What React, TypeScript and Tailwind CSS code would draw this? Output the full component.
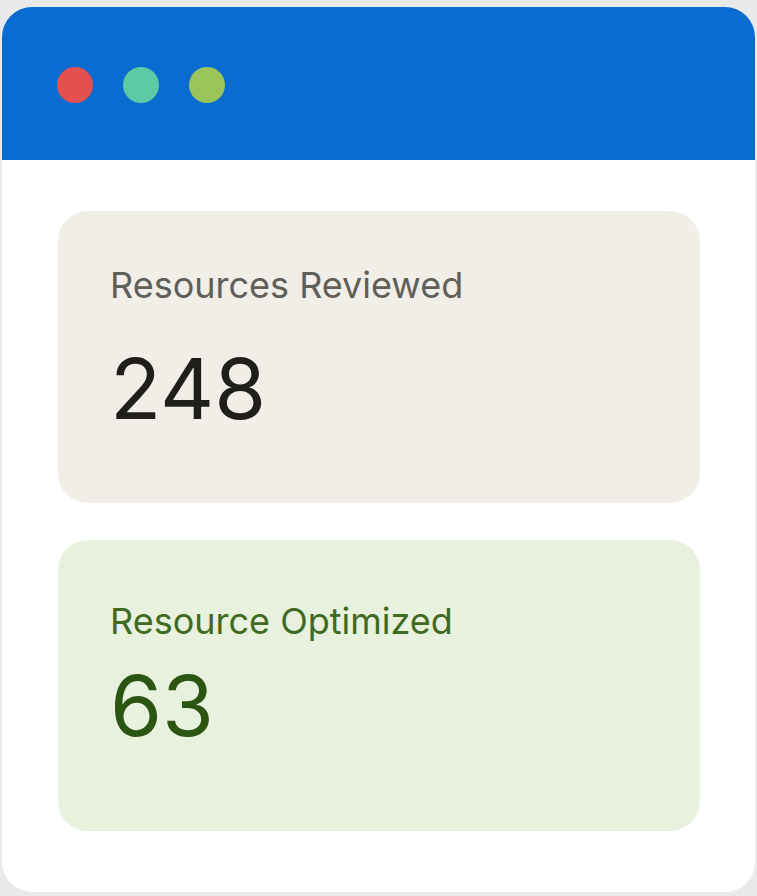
export default function App() {
  return (
    <div
      className="h-[896px] w-[757px] bg-[#e9e9e9] pl-[2px] pr-[2px] pt-[7px] pb-[4px]"
      style={{ fontFamily: "Inter, 'Noto Sans', sans-serif" }}
    >
      <div className="flex h-full flex-col overflow-hidden rounded-[30px] bg-white">
        {/* title bar */}
        <div className="flex h-[153px] items-start gap-[30px] bg-[#0a6bd0] pl-[55px] pt-[60px]">
          <span className="h-[36px] w-[36px] rounded-full bg-[#e44f4f]" />
          <span className="h-[36px] w-[36px] rounded-full bg-[#5ccaa5]" />
          <span className="h-[36px] w-[36px] rounded-full bg-[#9bc45a]" />
        </div>

        <div className="flex flex-col gap-[37px] px-[55px] pl-[56px] pt-[51px]">
          <div className="h-[292px] rounded-[30px] bg-[#f0eee7] pl-[52px] pt-[56px]">
            <div className="text-[36px] leading-none text-[#5f5e59]">Resources Reviewed</div>
            <div className="mt-[44px] text-[84px] leading-none text-[#1f1e1b]">248</div>
          </div>
          <div className="h-[291px] rounded-[30px] bg-[#e8f1de] pl-[52px] pt-[63px]">
            <div className="text-[36px] leading-none text-[#3e6b1f]">Resource Optimized</div>
            <div className="mt-[25px] text-[84px] leading-none text-[#2b5510]">63</div>
          </div>
        </div>
      </div>
    </div>
  );
}
